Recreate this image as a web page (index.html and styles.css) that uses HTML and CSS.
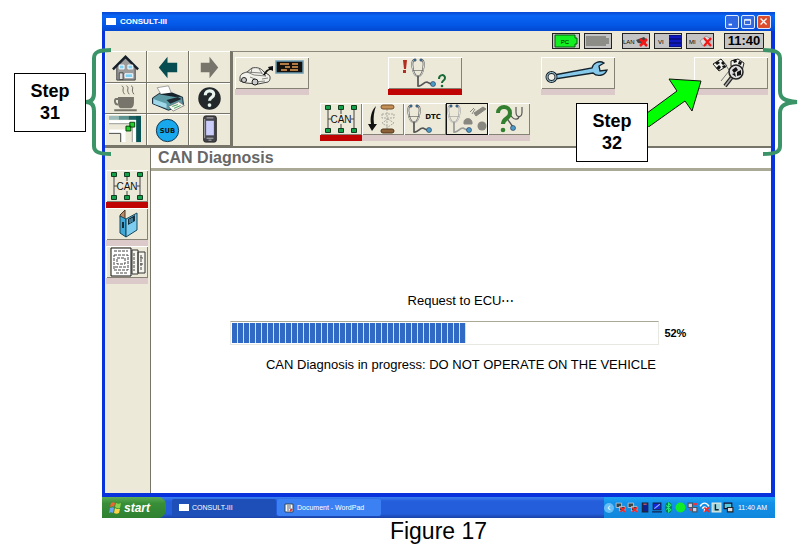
FILE: index.html
```html
<!DOCTYPE html>
<html lang="en">
<head>
    <meta charset="UTF-8">
    <meta name="viewport" content="width=device-width, initial-scale=1.0">
    <title>CONSULT-III</title>
    <link rel="stylesheet" href="styles.css">
</head>
<body>

    <!-- shared icons -->
    <svg class="defs" aria-hidden="true">
        <symbol id="can" viewBox="0 0 42 32">
            <path d="M8 5v22M21 5v22M34 5v22M8 16h3M31 16h3" stroke="#444" fill="none"/>
            <rect class="plate" x="11" y="11" width="20" height="10"/>
            <g fill="#12a04a" stroke="#123c20">
                <path d="M5.500 2.500h5v4h-5zM18.500 2.500h5v4h-5zM31.500 2.500h5v4h-5zM5.500 25.500h5v4h-5zM18.500 25.500h5v4h-5zM31.500 25.500h5v4h-5z"/>
            </g>
        </symbol>
        <symbol id="scope" viewBox="0 0 26 30">
            <path d="M4 2C1 2 1 6 1.500 9C2 13 3 18 7 18.500C11 18 12 13 12.500 9C13 6 13 2 10 2" fill="none" stroke="currentColor" stroke-width="2"/>
            <path d="M4 2C1 2 1 6 1.500 9C2 13 3 18 7 18.500C11 18 12 13 12.500 9C13 6 13 2 10 2" fill="none" stroke="#f4f4ee" stroke-width="0.900"/>
            <path d="M2 12.500h10" stroke="currentColor" stroke-width="0.600"/>
            <path d="M7 18v10c4 1 5-4 9-4l4 2" fill="none" stroke="currentColor" stroke-width="1.700"/>
            <circle cx="22" cy="26" r="2.500" class="bulb"/>
            <path d="M3 1h2v2h-2zM9 1h2v2h-2z" class="bulb"/>
        </symbol>
        <symbol id="pcs" viewBox="0 0 10 10">
            <path d="M1 1h5v4h-5zM4 4h5v4h-5z" fill="#344" stroke="#b9c6dc" stroke-width="0.800"/>
            <path d="M5 5l4 4M9 5l-4 4" stroke="#f22" stroke-width="1.500"/>
        </symbol>
    </svg>

    <figure class="figure">
        <div class="window">
            <header class="titlebar">
                <span class="app-icon"></span>
                <span class="title">CONSULT-III</span>
                <button class="control" aria-label="Minimize"><svg viewBox="0 0 14 14"><path d="M3 10h4" stroke="#fff" stroke-width="2"/></svg></button>
                <button class="control" aria-label="Maximize"><svg viewBox="0 0 14 14"><path d="M3 4h7v6h-7zM3 5h7" stroke="#fff" fill="none"/></svg></button>
                <button class="control close" aria-label="Close"><svg viewBox="0 0 14 14"><path d="M3 3l7 7M10 3l-7 7" stroke="#fff" stroke-width="1.500"/></svg></button>
            </header>

            <div class="status">
                <span class="badge"><svg viewBox="0 0 26 14"><path d="M2 1h20v3h2v6h-2v3h-20z" fill="#12f022" stroke="#0a5c10"/><text x="12" y="10" text-anchor="middle" class="tiny">PC</text></svg></span>
                <span class="badge"><svg viewBox="0 0 26 14"><path d="M1 2h20v2h3v6h-3v2h-20z" fill="#8d8d88"/></svg></span>
                <span class="badge lan"><svg viewBox="0 0 26 14"><text x="0" y="10" class="tiny">LAN</text><path d="M13 6l8-3 3 3-2 4-7-1z" fill="#444"/><path d="M17 5l7 7M24 5l-7 7" stroke="#f01818" stroke-width="2.500"/></svg></span>
                <span class="badge"><svg viewBox="0 0 26 14"><text x="3" y="10" class="tiny">VI</text><path d="M14 1h12v12h-12z" fill="#000850"/><path d="M14 3h12M14 7h12M14 11h12" stroke="#1018c0" stroke-width="3"/></svg></span>
                <span class="badge"><svg viewBox="0 0 26 14"><text x="2" y="10" class="tiny">MI</text><path d="M13 7l6-5 5 3-2 6-6 1z" fill="#ddd" stroke="#888" stroke-width="0.700"/><path d="M17 4l7 8M24 4l-7 8" stroke="#f01818" stroke-width="2.200"/></svg></span>
                <time class="clock">11:40</time>
            </div>

            <div class="toolbar">
                <nav class="nav-grid" aria-label="General">
                    <button aria-label="Home"><svg viewBox="0 0 42 32">
                        <path d="M12 16l9-10 10 10v14h-19z" fill="#9b9b9b" stroke="#444"/>
                        <path d="M8 19l13-13 13 13" fill="none" stroke="#16202a" stroke-width="2.500"/>
                        <path d="M14.500 14.500h5v4h-5zM23.500 14.500h5v4h-5zM20.500 23.500h8v4h-8z" fill="#7fd0f5" stroke="#fff"/>
                        <path d="M14.500 22.500h4v7h-4z" fill="#ddd" stroke="#444"/></svg></button>
                    <button aria-label="Back"><svg viewBox="0 0 42 32"><path d="M12 17l9-11v6h10v10h-10v6z" fill="#064c50"/></svg></button>
                    <button aria-label="Forward"><svg viewBox="0 0 42 32"><path d="M30 17l-9-11v6h-9v10h9v6z" fill="#77746c"/></svg></button>
                    <button aria-label="Standby"><svg viewBox="0 0 42 32">
                        <path d="M13 15h17v6c0 4-2 6-4 6h-9c-3 0-4-3-4-6zM9 28h24v2h-24z" fill="#77746c"/>
                        <path d="M14 17h-3c-2 0-2 6 2 6" fill="none" stroke="#77746c" stroke-width="2"/>
                        <path d="M17 3c4 2-1 4 3 9M22 3c4 2-1 4 3 9M27 3c4 2-1 4 3 9" fill="none" stroke="#66635c"/></svg></button>
                    <button aria-label="Print"><svg viewBox="0 0 42 32">
                        <path d="M5 16l9-6 23 5 1 8-16 6-17-7z" fill="#5c9aa6" stroke="#123" />
                        <path d="M14 12l-4-7 12-2 4 10z" fill="#fff" stroke="#777" stroke-width="0.700"/>
                        <path d="M12 12l17 3 7-1-10-4z" fill="#17222a"/>
                        <path d="M6 17l14 5v5l-14-5z" fill="#9fd8e8"/>
                        <path d="M20 18l12-3 4 2-12 5z" fill="#202a30"/>
                        <path d="M22 25l11-5 6 4-12 6z" fill="#f5f5ee" stroke="#666" stroke-width="0.700"/>
                        <path d="M26 25l6-2M28 27l7-3" stroke="#3a9c55"/></svg></button>
                    <button aria-label="Help"><svg viewBox="0 0 42 32"><circle cx="21" cy="16.500" r="12" fill="#23282a"/><path d="M16.500 13c0-6 9-6 9-1 0 4-4.500 3-4.500 7" fill="none" stroke="#e8f5ee" stroke-width="3.400"/><circle cx="21" cy="23.500" r="2" fill="#e8f5ee"/></svg></button>
                    <button aria-label="Screen layout"><svg viewBox="0 0 42 32">
                        <path d="M4 2h10v4h-10z" fill="#9dbcbb"/><path d="M14 2h10v4h-10z" fill="#5c9291"/><path d="M24 2h13v4h-13z" fill="#1d6365"/>
                        <path d="M32 2h5v27h-5z" fill="#075356"/>
                        <path d="M4 8h26v21" fill="none" stroke="#fff" stroke-width="3"/><path d="M4 10h24v19" fill="none" stroke="#999"/>
                        <path d="M4 18h15v11" fill="none" stroke="#fff" stroke-width="4"/><path d="M4 20h12v9" fill="none" stroke="#444"/>
                        <path d="M21.500 12.500h5v5h-5zM25.500 8.500h5v5h-5z" fill="#20d42c" stroke="#083e0a"/></svg></button>
                    <button aria-label="Sub mode"><svg viewBox="0 0 42 32"><circle cx="21" cy="17" r="11.500" fill="#18a8ee" stroke="#123448"/><text x="21" y="20" text-anchor="middle" class="sub-text">SUB</text></svg></button>
                    <button aria-label="Device"><svg viewBox="0 0 42 32"><rect x="15" y="2" width="13" height="27" rx="2" fill="#45454d" stroke="#222"/><path d="M16 5v20" stroke="#aaa"/><path d="M17.500 7h8v15h-8z" fill="#cbcdfb"/><path d="M18 4h7M18 25h7M20 27h3" stroke="#bbb"/></svg></button>
                </nav>

                <div class="tools">
                    <div class="tool-row">
                        <button class="tool wide" aria-label="Vehicle selection"><svg viewBox="0 0 74 32">
                            <path d="M5 21c0-4 3-5 7-6l5-4c5-1 9 0 12 4l5 3c2 2 1 6-1 7l-10 2-12-1-6-2z" fill="#f3f2ea" stroke="#333" stroke-width="0.900"/>
                            <path d="M12 15l14 1 5 3-12-1zM17 11l-1 5M24 12l3 4M15 20l5 2M27 22l6-1M20 25l10-1" fill="none" stroke="#555" stroke-width="0.700"/>
                            <circle cx="9" cy="23" r="2.500" fill="#ccc" stroke="#222"/><circle cx="20" cy="25" r="3" fill="#ccc" stroke="#222"/>
                            <path d="M28 18c2-4 4-6 6-6l-1-2 5-1v5l-2-1c-3 0-4 2-6 5z" fill="#111"/>
                            <path d="M41 4h27v12h-27z" fill="#14100e" stroke="#6f9eb5" stroke-width="1.500"/>
                            <path d="M45 7h9M57 7h6M50 10h5M57 10h6M46 13h6M55 13h8" stroke="#e49d58" stroke-width="1.500"/></svg></button>
                        <button class="tool wide active" aria-label="Diagnosis"><svg viewBox="0 0 74 32">
                            <path d="M15 3h4l-1 9h-2zM15 13h3v3h-3z" fill="#b52c20"/>
                            <use href="#scope" x="23" y="1" width="26" height="30"/>
                            <path d="M51 22c0-5 6-5 6-1 0 3-3 2-3 5" fill="none" stroke="#176a36" stroke-width="2"/><circle cx="54" cy="29" r="1.300" fill="#176a36"/></svg></button>
                        <button class="tool wide" aria-label="Maintenance"><svg viewBox="0 0 74 32">
                            <path d="M13 18L51 11c1-5 7-8 12-5l-5 3 1 5 7-1c-2 6-10 7-14 3L14 22z" fill="#86c9ea" stroke="#14222c" stroke-width="1.300"/>
                            <circle cx="10.500" cy="20" r="4.500" fill="#f1efe5" stroke="#14222c" stroke-width="3"/><circle cx="10.500" cy="20" r="4.500" fill="none" stroke="#b8dceb"/></svg></button>
                        <button class="tool wide" aria-label="Final check"><svg viewBox="0 0 74 32">
                            <path d="M19 7l8-5 6 7-8 5z" fill="#f2f2ee" stroke="#222"/>
                            <path d="M21 6l3-2 2 2-3 2zM27 6l2-2 2 3-2 1zM22 11l3-3 2 2-2 3zM28 9l3-1 1 2-3 1z" fill="#111"/>
                            <path d="M37 4l7-2 6 4-2 8-11-5z" fill="#f2f2ee" stroke="#222"/>
                            <path d="M39 3l3-1 1 3-3 1zM45 4l3 1-1 3-3-1z" fill="#111"/>
                            <path d="M31 7l8 12M39 9L27 24" stroke="#777"/>
                            <path d="M38 20l-7 9" stroke="#222" stroke-width="4"/><path d="M38 20l-7 9" stroke="#aaa" stroke-width="1.500"/>
                            <circle cx="42" cy="15" r="7" fill="#ddd" stroke="#222" stroke-width="1.500"/>
                            <path d="M38 13l4-3 2 3-4 3zM43 15l4-2v5l-4 1zM38 17l3-1 1 4z" fill="#111"/></svg></button>
                    </div>
                    <div class="tool-row sub">
                        <button class="tool active" aria-label="CAN diagnosis"><svg viewBox="0 0 42 32"><use href="#can" width="42" height="32"/><text x="21" y="20" text-anchor="middle" class="can-text">CAN</text></svg></button>
                        <button class="tool" aria-label="Procedure"><svg viewBox="0 0 42 32">
                            <path d="M14 3c-5 5-6 12-5 18H6l4 7 5-7h-3c-1-7 0-12 2-18z" fill="#111"/>
                            <path d="M25 6v20M20 11h12v4h-12zM26 16l6 4-6 4-6-4z" fill="none" stroke="#aaa8a0" stroke-dasharray="2 1"/>
                            <rect x="19" y="2" width="13" height="4" rx="2" fill="#c49056" stroke="#77502a"/><rect x="19" y="26" width="13" height="4" rx="2" fill="#8d6238" stroke="#50341a"/></svg></button>
                        <button class="tool" aria-label="DTC"><svg viewBox="0 0 42 32"><use href="#scope" x="3" y="1" width="26" height="30"/><text x="29" y="16" text-anchor="middle" class="dtc-text">DTC</text></svg></button>
                        <button class="tool muted" aria-label="Component test"><svg viewBox="0 0 42 32"><use href="#scope" x="1" y="1" width="26" height="30"/>
                            <path d="M18 19c0-4 7-5 8 0v2h-8zM28 10l9-6 3 2-10 7zM24 9l4-4M26 11l3-5" fill="#888780" stroke="#888780"/><circle cx="36" cy="23" r="4.500" fill="#888780"/></svg></button>
                        <button class="tool" aria-label="Diagnosis help"><svg viewBox="0 0 42 32">
                            <path d="M28 4v5c0 6 6 6 6 0V4" fill="none" stroke="#555" stroke-width="1.200"/>
                            <path d="M31 13c0 4-5 4-7 1s-6-1-4 3l5 7" fill="none" stroke="#555" stroke-width="1.300"/>
                            <path d="M10 10c0-8 12-8 12 0 0 6-7 5-7 11" fill="none" stroke="#327f30" stroke-width="4"/><circle cx="15" cy="27" r="2.300" fill="#327f30"/>
                            <circle cx="25" cy="25" r="2.500" class="bulb"/></svg></button>
                    </div>
                </div>
            </div>

            <div class="workspace">
                <aside class="sidebar">
                    <button class="tool active" aria-label="CAN"><svg viewBox="0 0 42 32"><use href="#can" width="42" height="32"/><text x="21" y="20" text-anchor="middle" class="can-text">CAN</text></svg></button>
                    <button class="tool" aria-label="CAN manual"><svg viewBox="0 0 42 32">
                        <path d="M14 7l5-5v9l-4 3z" fill="#bd8b62" stroke="#493528"/>
                        <path d="M14 8l6 3v18l-6-4z" fill="#42a8d7" stroke="#174658"/><path d="M20 11l11-6v17l-11 7z" fill="#7dcdf1" stroke="#174658"/>
                        <path d="M22 11l7-4v6l-7 4z" fill="#16303e"/><path d="M24 11v4M26 10v4" stroke="#73c7eb"/><path d="M17 14v6" stroke="#13303c" stroke-width="2"/></svg></button>
                    <button class="tool" aria-label="CAN records"><svg viewBox="0 0 42 32">
                        <path d="M26 4h6v24h-6zM32 6h7v21h-7z" fill="#f6f5ed" stroke="#333"/><path d="M5 2h20v28h-20z" fill="#fff" stroke="#111"/>
                        <path d="M8 5h14M8 9h14v15h-14zM11 12h8v6h-8zM9 21h12M10 27h11M28 7v18M35 9v15M34 12h3M34 18h3" fill="none" stroke="#444" stroke-dasharray="3 1"/></svg></button>
                </aside>

                <main class="content">
                    <h1>CAN Diagnosis</h1>
                    <div class="progress-panel">
                        <label for="ecu">Request to ECU⋯</label>
                        <div class="progress-line">
                            <progress id="ecu" max="100" value="55"></progress>
                            <span class="percent">52%</span>
                        </div>
                        <p>CAN Diagnosis in progress: DO NOT OPERATE ON THE VEHICLE</p>
                    </div>
                </main>
            </div>
        </div>

        <footer class="taskbar">
            <button class="start"><svg viewBox="0 0 14 14"><path d="M3 2c2-1 3-1 4 0l-1 4c-1-1-2-1-4 0z" fill="#f06430"/><path d="M8 2c2 1 3 1 5 0l-1 5c-2 1-3 0-5-1z" fill="#8dd44d"/><path d="M2 7c2-1 3-1 4 0l-1 5c-1-1-2-1-4 0z" fill="#68a4f4"/><path d="M7 7c1 1 3 1 5 1l-1 4c-2 1-3 1-5 0z" fill="#fbd348"/></svg>start</button>
            <button class="task current"><span class="app-icon"></span>CONSULT-III</button>
            <button class="task"><svg viewBox="0 0 10 10"><path d="M1 1h8v8h-8z" fill="#fff" stroke="#345"/><path d="M3 3h4M3 5h4M3 7h2" stroke="#567"/><path d="M6 8l2-2" stroke="#d33" stroke-width="2"/></svg>Document - WordPad</button>
            <div class="tray">
                <button class="expand" aria-label="Show hidden icons">‹</button>
                <svg viewBox="0 0 10 10"><use href="#pcs"/></svg>
                <svg viewBox="0 0 10 10"><use href="#pcs"/></svg>
                <svg viewBox="0 0 10 10"><path d="M3 1h5v8h-5z" fill="#102090" stroke="#223"/><path d="M4 2h3" stroke="#d66"/></svg>
                <svg viewBox="0 0 10 10"><path d="M2 1h7v6h-7zM1 9h9" fill="#1426d8" stroke="#15204c"/><path d="M3 6l5-4" stroke="#8fb4ff"/></svg>
                <svg viewBox="0 0 10 10"><ellipse cx="5" cy="5" rx="3" ry="5" fill="#087850"/><path d="M3 3l4 4-2 2V1l2 2-4 4" fill="none" stroke="#25e875"/></svg>
                <svg viewBox="0 0 10 10"><circle cx="5" cy="5" r="4.500" fill="#10ed28"/></svg>
                <svg viewBox="0 0 10 10"><path d="M1 1h4v4h-4zM5 5h4v4h-4z" fill="#d8d0e4" stroke="#456"/><path d="M6 2h3M2 7h2" stroke="#e34" stroke-width="2"/></svg>
                <svg viewBox="0 0 10 10"><path d="M1 4c2-4 6-4 8 0M3 6c1-2 3-2 4 0M5 6v3" fill="none" stroke="#fff" stroke-width="1.300"/><path d="M5 5l4 4M9 5l-4 4" stroke="#f22" stroke-width="1.500"/></svg>
                <svg viewBox="0 0 10 10"><path d="M1 1h8v8h-8z" fill="#9dd9df" stroke="#dfe7de"/><path d="M4 2v5h3" fill="none" stroke="#123" stroke-width="1.300"/></svg>
                <svg viewBox="0 0 10 10"><path d="M1 1h7v5h-7z" fill="#58c8dc" stroke="#113"/><path d="M4 5h5v4h-5z" fill="#ddd" stroke="#222"/></svg>
                <time>11:40 AM</time>
            </div>
        </footer>

        <!-- callouts laid over the window -->
        <svg class="brace brace-left" viewBox="0 0 30 110" aria-hidden="true"><path d="M27 3c-12 0-17 2-17 8v35c0 6-3 9-8 9 5 0 8 3 8 9v35c0 6 5 8 17 8"/></svg>
        <div class="step step-31">Step<br>31</div>
        <svg class="brace brace-right" viewBox="0 0 40 110" aria-hidden="true"><path d="M2 3c12 0 17 2 17 8v33c0 7 4 10 17 11-13 1-17 4-17 11v33c0 6-5 8-17 8"/></svg>
        <svg class="arrow" viewBox="0 0 60 50" aria-hidden="true"><path d="M3 36L33 14l-8-12 32 2-9 30-7-10L3 51z"/></svg>
        <div class="step step-32">Step<br>32</div>

        <figcaption>Figure 17</figcaption>
    </figure>

</body>
</html>
```

FILE: styles.css
```css
* {
    box-sizing: border-box;
}

body {
    margin: 0;
    background: #fff;
    color: #000;
    font-family: "Liberation Sans", Arial, sans-serif;
}

button {
    padding: 0;
    border: 0;
    font-family: inherit;
    cursor: pointer;
}

svg {
    display: block;
}

.defs {
    position: absolute;
    width: 0;
    height: 0;
}

.figure {
    position: relative;
    display: flex;
    flex-direction: column;
    min-height: 100vh;
    margin: 0;
    padding: 12px 36px 9px 102px;
}

figcaption {
    padding-top: 1px;
    font-size: 23px;
    line-height: 25px;
    text-align: center;
}

/* Window frame */
.window {
    display: flex;
    flex: 1;
    flex-direction: column;
    border: solid #0833dc;
    border-width: 0 4px 4px 3px;
    background: #ece9d8;
}

.titlebar {
    display: flex;
    align-items: center;
    gap: 2px;
    height: 19px;
    margin: 0 -4px 0 -3px;
    padding: 0 4px;
    background: linear-gradient(#0848d0, #0a66f4 20%, #0456e6 70%, #0348d0);
    color: #fff;
}

.app-icon {
    width: 10px;
    height: 7px;
    background: #fff;
}

.title {
    flex: 1;
    padding-left: 2px;
    font-size: 8px;
    font-weight: bold;
}

.control {
    width: 14px;
    height: 14px;
    border: 1px solid #dfe9ff;
    border-radius: 2px;
    background: #2f68e0;
}

.close {
    background: #dc4d2c;
}

/* Status line */
.status {
    display: flex;
    align-items: center;
    justify-content: flex-end;
    gap: 4px;
    height: 20px;
    padding-right: 7px;
}

.badge {
    width: 28px;
    height: 16px;
    border: 1px solid #222;
    background: #c4c4c4;
}

.badge svg {
    width: 100%;
    height: 100%;
}

.lan {
    margin-left: 6px;
}

.clock {
    width: 40px;
    height: 16px;
    margin-left: 6px;
    border: 1px solid #222;
    background: #c4c4c4;
    font-size: 13px;
    font-weight: bold;
    line-height: 14px;
    text-align: center;
}

.tiny {
    font-size: 6px;
}

/* Toolbar */
.toolbar {
    display: flex;
    border-bottom: 2px solid #77756a;
}

.nav-grid {
    display: grid;
    grid-template-columns: repeat(3, 42px);
    grid-template-rows: 32px 31px 32px;
}

.nav-grid button {
    border: solid #77756a;
    border-width: 0 1px 1px 0;
    background: #ece9d8;
    box-shadow: inset 1px 1px #fff;
}

.nav-grid svg,
.tool svg {
    width: 100%;
    height: 100%;
}

.tools {
    flex: 1;
    padding: 5px 3px 4px 2px;
    border-top: 1px solid #8c897c;
    border-left: 2px solid #77756a;
}

.tool-row {
    display: flex;
    justify-content: space-between;
}

.sub {
    justify-content: flex-start;
    margin-top: 8px;
    padding-left: 85px;
}

.tool {
    width: 42px;
    height: 38px;
    border-bottom: 6px solid #dcc9c9;
    background: #ece9d8;
    box-shadow: inset 1px 1px #fff, inset -1px -1px #858275;
    color: #555;
}

.wide {
    width: 74px;
}

.active {
    border-bottom-color: #c00404;
}

.muted {
    box-shadow: inset 1px 1px #111, inset -1px -1px #111;
    color: #999;
}

.bulb {
    fill: #4a9cc4;
    stroke: #235;
    stroke-width: 0.6px;
}

.muted .bulb {
    fill: #888780;
    stroke: #888780;
}

.plate {
    fill: #ece9d8;
}

.can-text {
    fill: #111;
    font-size: 10px;
}

.sub-text,
.dtc-text {
    fill: #111;
    font-family: "DejaVu Sans", sans-serif;
    font-size: 7px;
    font-weight: bold;
}

/* Work area */
.workspace {
    display: flex;
    flex: 1;
}

.sidebar {
    display: flex;
    flex-direction: column;
    width: 46px;
    padding: 22px 1px 0;
    border-right: 1px solid #77756a;
}

.content {
    display: flex;
    flex: 1;
    flex-direction: column;
    background: #fff;
}

h1 {
    margin: 0;
    padding: 0 7px;
    border-bottom: 3px solid #aaa995;
    color: #666;
    font-size: 16px;
    line-height: 20px;
}

.progress-panel {
    display: flex;
    flex: 1;
    flex-direction: column;
    align-items: center;
    gap: 12px;
    padding: 122px 0 40px;
    font-size: 13px;
    line-height: 16px;
}

.progress-panel p {
    margin: 0;
}

.progress-line {
    display: flex;
    align-items: center;
    justify-content: center;
    gap: 5px;
    width: 100%;
    padding-right: 6px;
}

progress {
    width: 70%;
    height: 24px;
    padding: 1px;
    border: 1px solid #e8e8e2;
    border-top-color: #aaa995;
    appearance: none;
}

progress::-webkit-progress-bar {
    background: #fff;
}

progress::-webkit-progress-value {
    background: repeating-linear-gradient(to right, #316ac5 0 5px, #d4e0f2 5px 6px);
}

.percent {
    font-size: 11px;
    font-weight: bold;
}

/* Taskbar */
.taskbar {
    display: flex;
    height: 21px;
    background: linear-gradient(#3b80f0, #245edb 20%, #245edb 80%, #1941a5);
    color: #fff;
}

.start {
    display: flex;
    align-items: center;
    gap: 2px;
    width: 64px;
    margin-right: 6px;
    padding-left: 6px;
    border-radius: 0 8px 8px 0;
    background: linear-gradient(#5eac56, #388e38 30%, #2f8130);
    color: #fff;
    font-size: 12px;
    font-style: italic;
    font-weight: bold;
}

.start svg {
    width: 14px;
    height: 14px;
}

.task {
    display: flex;
    align-items: center;
    gap: 3px;
    width: 104px;
    margin: 2px 1px 2px 0;
    padding-left: 7px;
    border-radius: 2px;
    background: #3c81f3;
    color: #fff;
    font-size: 7px;
}

.current {
    background: #1e4fb8;
}

.task svg {
    width: 10px;
    height: 10px;
}

.tray {
    display: flex;
    align-items: center;
    gap: 1px;
    margin-left: auto;
    padding-right: 8px;
    background: linear-gradient(#1fa5f4, #1290e8 30%, #1187dc);
    font-size: 7px;
}

.tray svg {
    width: 11px;
    height: 11px;
}

.tray time {
    padding-left: 3px;
}

.expand {
    width: 10px;
    height: 10px;
    border-radius: 50%;
    background: #66bdf5;
    color: #fff;
    font-size: 10px;
    line-height: 8px;
}

/* Callouts */
.step {
    position: absolute;
    width: 72px;
    height: 59px;
    padding-top: 6px;
    border: 1px solid #000;
    background: #fff;
    font-size: 18px;
    font-weight: bold;
    line-height: 22px;
    text-align: center;
}

.step-31 {
    top: 73px;
    left: 14px;
}

.step-32 {
    top: 103px;
    right: 163px;
}

.brace {
    position: absolute;
    top: 47px;
    height: 110px;
    fill: none;
    stroke: #3a9468;
    stroke-width: 4px;
}

.brace-left {
    left: 84px;
    width: 30px;
}

.brace-right {
    right: 10px;
    width: 40px;
}

.arrow {
    position: absolute;
    top: 77px;
    right: 107px;
    width: 60px;
    height: 50px;
    fill: #0f0;
    stroke: #111;
    stroke-width: 1px;
}
```
